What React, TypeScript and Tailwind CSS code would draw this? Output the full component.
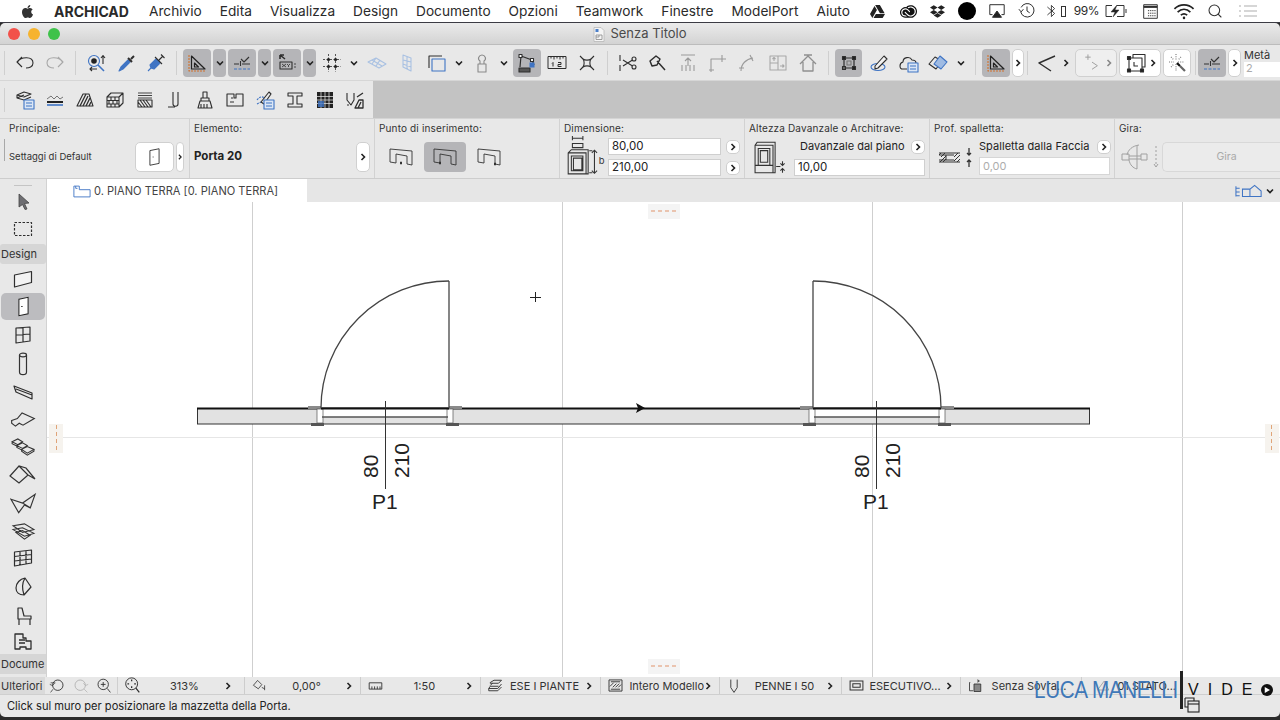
import type { ReactNode } from "react";
import { FaApple, FaDropbox, FaGoogleDrive } from "react-icons/fa";
import { SiAdobecreativecloud } from "react-icons/si";
import { Search } from "lucide-react";

const BLUE = "#3f74c4";

const I = ({ children, s = 20, c = "#2e2e2e" }: { children: ReactNode; s?: number; c?: string }) => (
  <svg viewBox="0 0 20 20" width={s} height={s} fill="none" stroke={c} strokeWidth={1.1} strokeLinejoin="round">
    {children}
  </svg>
);

const Chev = ({ c = "#222" }: { c?: string }) => (
  <svg viewBox="0 0 8 8" width={8} height={8} fill="none" stroke={c} strokeWidth={1.6}>
    <path d="M2.5 1 L5.5 4 L2.5 7" />
  </svg>
);

const ChevDown = () => (
  <svg viewBox="0 0 8 8" width={8} height={8} fill="none" stroke="#222" strokeWidth={1.6}>
    <path d="M1 2.5 L4 5.5 L7 2.5" />
  </svg>
);

const Sep = ({ className = "" }: { className?: string }) => (
  <div className={`w-px h-[24px] shrink-0 bg-[#cfcfcf] ${className}`} />
);

const Tool = ({ w, children }: { w: string; children?: ReactNode }) => (
  <div className={`${w} shrink-0 h-full flex items-center justify-center`}>{children}</div>
);

const Pressed = ({ w, children }: { w: string; children?: ReactNode }) => (
  <div className={`${w} shrink-0 h-[28px] rounded-[4px] bg-[#b5b5b8] flex items-center justify-center`}>{children}</div>
);

const WhiteBtn = ({ w, children, off }: { w: string; children?: ReactNode; off?: boolean }) => (
  <div
    className={`${w} shrink-0 h-[28px] rounded-[5px] border border-[#d0d0d0] flex items-center justify-center ${off ? "bg-[#efefef]" : "bg-white"}`}
  >
    {children}
  </div>
);

const SetSquare = () => (
  <I>
    <path d="M2 2 V18 H19" stroke="#d2702a" strokeDasharray="2 1" />
    <path d="M4.5 3 L18 16 H4.5 Z M7.5 10 L11.5 14 H7.5 Z" stroke="#222" strokeWidth={1.2} />
  </I>
);

const GuideMark = () => (
  <I>
    <path d="M2 11 H7 M10 11 H18 M8.5 8 V13 M9 6 L12 9 L17 4" stroke="#333" />
    <path d="M2 16 H18" stroke={BLUE} strokeDasharray="3 1.5" />
  </I>
);

const MenuBar = () => (
  <div className="h-[23px] shrink-0 bg-white border-b border-[#3c3c44] flex items-center text-[14px] text-[#2a2a2a] relative">
    <FaApple className="ml-[20px] text-[15px] text-[#333]" />
    <span className="ml-[19px] font-bold">ARCHICAD</span>
    <div className="ml-[20px] flex gap-[18px] text-[13.7px]">
      <span>Archivio</span>
      <span>Edita</span>
      <span>Visualizza</span>
      <span>Design</span>
      <span>Documento</span>
      <span>Opzioni</span>
      <span>Teamwork</span>
      <span>Finestre</span>
      <span>ModelPort</span>
      <span>Aiuto</span>
    </div>
    <div className="ml-auto flex items-center">
      <FaGoogleDrive className="text-[15px] text-[#222]" />
      <SiAdobecreativecloud className="ml-[15px] text-[17px] text-[#111]" />
      <FaDropbox className="ml-[13px] text-[15px] text-[#222]" />
      <div className="ml-[13px] w-[18px] h-[18px] rounded-full bg-black" />
      <div className="ml-[12px]">
        <I s={18}>
          <path d="M2 14 V3 H18 V14 H15 M5 14 H2" />
          <path d="M10 10 L15 17 H5 Z" fill="#222" />
        </I>
      </div>
      <div className="ml-[12px]">
        <I s={18}>
          <path d="M3.5 6 A7.5 7.5 0 1 1 3 11 M1 8 L3.5 11 L6 8 M10 5 V10 L13 12" />
        </I>
      </div>
      <div className="ml-[9px] flex items-center">
        <I s={16}>
          <path d="M3 5 L12 13 L8 17 V3 L12 7 L3 15" />
        </I>
        <div className="w-[5px] h-[11px] border border-[#333]" />
      </div>
      <span className="ml-[8px] text-[12px] tracking-[-0.5px]">99%</span>
      <div className="ml-[5px]">
        <svg viewBox="0 0 24 14" width={24} height={14} fill="none" stroke="#333" strokeWidth={1}>
          <path d="M8 1.5 H2 V12.5 H8 M13 1.5 H20 V12.5 H13 M22 5 V9" />
          <path d="M13 1 L7 8 H11 L9 13 L15 6 H11 Z" fill="#222" strokeWidth={0.5} />
        </svg>
      </div>
      <div className="ml-[14px]">
        <I s={17}>
          <path d="M2 2 H18 V18 H2 Z" />
          <path d="M2 4.5 H18" strokeWidth={2.5} />
          <path d="M7 9 H16 M7 12 H16 M7 15 H16" strokeDasharray="1.5 1" />
        </I>
      </div>
      <div className="ml-[14px]">
        <svg viewBox="0 0 20 16" width={22} height={17} fill="none" stroke="#222" strokeWidth={1.6}>
          <path d="M1 5.5 C6 0.5 14 0.5 19 5.5 M4 8.5 C7.5 5 12.5 5 16 8.5 M7 11.5 C8.8 10 11.2 10 13 11.5" />
          <circle cx="10" cy="14" r="1.2" fill="#222" stroke="none" />
        </svg>
      </div>
      <Search className="ml-[12px] text-[#333]" size={16} strokeWidth={1.6} />
      <div className="ml-[15px] mr-[22px]">
        <svg viewBox="0 0 20 14" width={20} height={14} fill="none" stroke="#c9c9c9" strokeWidth={1.4}>
          <path d="M1 2 H3 M6 2 H19 M1 7 H3 M6 7 H19 M1 12 H3 M6 12 H19" />
        </svg>
      </div>
    </div>
  </div>
);

const TitleBar = () => (
  <div className="h-[22px] shrink-0 rounded-t-[5px] border-b border-[#bcbcbc] bg-gradient-to-b from-[#ebebeb] to-[#d3d3d3] flex items-center relative">
    <div className="ml-[8px] flex gap-[8px]">
      <div className="w-[12px] h-[12px] rounded-full bg-[#f2514a]" />
      <div className="w-[12px] h-[12px] rounded-full bg-[#f6b32e]" />
      <div className="w-[12px] h-[12px] rounded-full bg-[#3fc24a]" />
    </div>
    <div className="flex-1 flex items-center justify-center gap-[5px] pr-[60px] pt-[1px] text-[13px] text-[#4a4a4a]">
      <svg viewBox="0 0 12 15" width={12} height={15} fill="#f4f4f4" stroke="#b8b8b8" strokeWidth={0.8}>
        <path d="M1 0.5 H8 L11 3.5 V14.5 H1 Z" />
        <rect x="2.5" y="2" width="3" height="3" fill="#4a7fc9" stroke="none" />
        <path d="M3 8 H9 V12.5 H3 Z M3 10 H6 V8" stroke="#888" />
      </svg>
      <span>Senza Titolo</span>
    </div>
  </div>
);

const ToolbarOne = () => (
  <div className="h-[36px] shrink-0 bg-[#e8e8e8] border-b border-[#d6d6d6] flex items-center">
    <Sep className="ml-[4px]" />
    <Tool w="ml-[5px] w-[30px]">
      <I>
        <path d="M7 4 L2 9 L7 14 M2.5 9 C6 3.5 18 3 18 10 C18 14 14 15 11 15" />
      </I>
    </Tool>
    <Tool w="w-[30px]">
      <I c="#a8a8a8">
        <path d="M13 4 L18 9 L13 14 M17.5 9 C14 3.5 2 3 2 10 C2 14 6 15 9 15" />
      </I>
    </Tool>
    <Sep className="ml-[5px]" />
    <Tool w="ml-[6px] w-[30px]">
      <I>
        <circle cx="7" cy="8" r="5.5" stroke={BLUE} />
        <circle cx="7" cy="8" r="2.8" fill="#222" stroke="none" />
        <path d="M11 12 L17 18" stroke={BLUE} strokeWidth={1.6} />
        <path d="M16 3 V11 M14 5 L16 2.5 L18 5 M3 16 H10 M5 14 L3 16 L5 18" />
      </I>
    </Tool>
    <Tool w="w-[29px]">
      <I>
        <path d="M2 18 L4 14 L11 7 L13 9 L6 16 Z" fill={BLUE} stroke={BLUE} />
        <path d="M11 5 L15 9 M14 6 L17 3" strokeWidth={2} />
      </I>
    </Tool>
    <Tool w="w-[30px]">
      <I>
        <path d="M2 18 L5 15 M5 15 L4 12 L10 6 L14 10 L8 16 Z" fill={BLUE} stroke={BLUE} />
        <path d="M9 4 L16 11 M13 7 L17 3 M15 1.5 L18.5 5" />
      </I>
    </Tool>
    <Sep className="ml-[5px]" />
    <Pressed w="ml-[6px] w-[28px]">
      <SetSquare />
    </Pressed>
    <Pressed w="ml-[2px] w-[13px]">
      <ChevDown />
    </Pressed>
    <Pressed w="ml-[2px] w-[28px]">
      <GuideMark />
    </Pressed>
    <Pressed w="ml-[2px] w-[13px]">
      <ChevDown />
    </Pressed>
    <Pressed w="ml-[2px] w-[28px]">
      <I>
        <path d="M3 2 L8 6 M3 2 H7 M3 2 V6" strokeWidth={1.6} />
        <rect x="3" y="9" width="12" height="7" />
        <path d="M5 11 L9 14 M9 11 L5 14 M10 11 L11.5 12.5 L13 11 M11.5 12.5 V14 M17 11 H19 M17 14 H19" strokeWidth={0.8} />
      </I>
    </Pressed>
    <Pressed w="ml-[2px] w-[13px]">
      <ChevDown />
    </Pressed>
    <Tool w="ml-[2px] w-[28px]">
      <I>
        <path d="M6.5 1 V19 M13.5 1 V19 M1 6.5 H19 M1 13.5 H19" strokeDasharray="2 1.5" strokeWidth={0.8} />
        <circle cx="6.5" cy="6.5" r="1.6" fill="#222" stroke="none" />
        <circle cx="13.5" cy="6.5" r="1.6" fill="#222" stroke="none" />
        <circle cx="6.5" cy="13.5" r="1.6" fill="#222" stroke="none" />
        <circle cx="13.5" cy="13.5" r="1.6" fill="#222" stroke="none" />
      </I>
    </Tool>
    <Tool w="w-[16px]">
      <ChevDown />
    </Tool>
    <Tool w="w-[30px]">
      <I c="#a9c1e2">
        <path d="M1 9 L9 5 L19 11 L12 15 Z M5 7 L15 13 M9 5 L5 11 M13 7 L9 13" />
      </I>
    </Tool>
    <Tool w="w-[30px]">
      <I c="#a9c1e2">
        <path d="M6 2 L14 5 V18 L6 14 Z M6 7 L14 9 M6 11 L14 14 M10 3 V16" />
      </I>
    </Tool>
    <Tool w="w-[30px]">
      <I>
        <path d="M2 15 V3 H15" />
        <path d="M5 6 H18 V18 H5 Z" stroke={BLUE} />
      </I>
    </Tool>
    <Tool w="w-[14px]">
      <ChevDown />
    </Tool>
    <Tool w="w-[32px]">
      <I c="#8a8a8a">
        <path d="M6 11 H14 V19 H6 Z M8 11 V8 C5 6 7 2 10 2 C13 2 15 6 12 8 V11" />
      </I>
    </Tool>
    <Tool w="w-[12px]">
      <ChevDown />
    </Tool>
    <Pressed w="ml-[3px] w-[28px]">
      <I>
        <path d="M4 3 L15 7 M4 3 L3 14 M15 7 L17 12" strokeWidth={1.2} />
        <rect x="2" y="1.5" width="3" height="3" fill="#fff" />
        <rect x="13.5" y="5.5" width="3" height="3" fill="#fff" />
        <path d="M2 15 H13 V19 H2 Z" fill="#555" />
        <rect x="12.5" y="9.5" width="5" height="5" fill={BLUE} stroke="none" />
      </I>
    </Pressed>
    <Tool w="w-[32px]">
      <svg viewBox="0 0 20 14" width={20} height={15} fill="none" stroke="#2e2e2e" strokeWidth={1}>
        <path d="M1 1 H19 V13 H1 Z M4 1 V3 M7 1 V4 M10 1 V3 M13 1 V4 M16 1 V3" />
        <path d="M6 7 V11 M5 8 L6 7 M11 7 H14 V9 H11 V11 H14.5" />
      </svg>
    </Tool>
    <Tool w="w-[28px]">
      <I>
        <path d="M6 6 C8 7.5 12 7.5 14 6 C12.5 8 12.5 12 14 14 C12 12.5 8 12.5 6 14 C7.5 12 7.5 8 6 6 Z" />
        <path d="M3 3 L6 6 M17 3 L14 6 M3 17 L6 14 M17 17 L14 14" />
      </I>
    </Tool>
    <Sep className="ml-[6px]" />
    <Tool w="ml-[5px] w-[30px]">
      <I>
        <circle cx="16" cy="6" r="2" />
        <circle cx="16" cy="14" r="2" />
        <path d="M14.5 7 L5 13 M14.5 13 L5 7 M2 2 V8 M2 12 V18" />
      </I>
    </Tool>
    <Tool w="w-[30px]">
      <I>
        <path d="M2 8 L8 3 L12 6 L9 12 L4 13 Z M9 8 L17 17" strokeWidth={1.5} />
      </I>
    </Tool>
    <Tool w="w-[30px]">
      <I c="#9a9a9a">
        <path d="M3 2 H17 M10 13 V5 M7 8 L10 5 L13 8 M4 12 V18 M8 12 V18 M12 12 V18 M16 12 V18" />
      </I>
    </Tool>
    <Tool w="w-[28px]">
      <I c="#9a9a9a">
        <path d="M4 19 V6 H19 M2 17 H7 M15 2 V9" />
      </I>
    </Tool>
    <Tool w="ml-[1px] w-[30px]">
      <I c="#9a9a9a">
        <path d="M4 18 C4 11 9 6 16 5 M2 15 H7 M13 2 L16 8" />
      </I>
    </Tool>
    <Tool w="ml-[1px] w-[30px]">
      <I c="#a8a8a8">
        <path d="M2 3 H18 V17 H2 Z M10 3 V10 H2 M10 10 V17 M6 8 V5 M4.5 6 L6 4.5 L7.5 6 M12 13 H16 M14.5 11.5 L16 13 L14.5 14.5" />
      </I>
    </Tool>
    <Tool w="w-[30px]">
      <I c="#8f8f8f">
        <path d="M2 11 L10 3 L18 11 M5 9 V18 H15 V9 M6 2 H14" strokeWidth={1.3} />
      </I>
    </Tool>
    <Sep className="ml-[5px]" />
    <Pressed w="ml-[6px] w-[27px]">
      <I>
        <path d="M5 5 H15 V15 H5 Z" strokeWidth={1.2} />
        <rect x="3.5" y="3.5" width="3" height="3" fill="#222" />
        <rect x="13.5" y="3.5" width="3" height="3" fill="#222" />
        <rect x="13.5" y="13.5" width="3" height="3" fill="#222" />
        <rect x="3.5" y="13.5" width="3" height="3" fill="#666" />
        <path d="M8 8 H12 V12 H8 Z" stroke="#777" />
      </I>
    </Pressed>
    <Tool w="ml-[4px] w-[28px]">
      <I>
        <ellipse cx="8" cy="14" rx="7" ry="3.5" stroke={BLUE} />
        <path d="M5 13 L14 3 L17 6 L8 15 L5 16 Z" fill="#f2f2f2" />
      </I>
    </Tool>
    <Tool w="ml-[1px] w-[28px]">
      <I>
        <path d="M8 16 H4 C0 16 0 10 4 9 C4 4 11 3 13 7 C15 7 17 8 17 10" />
        <rect x="9" y="10" width="10" height="9" fill="#dbe6f5" stroke={BLUE} />
        <path d="M11 13 H17 M11 16 H17" stroke={BLUE} />
      </I>
    </Tool>
    <Tool w="ml-[1px] w-[28px]">
      <I>
        <path d="M1 11 L7 4 L14 8 L8 16 Z" />
        <path d="M6 11 L12 3 L19 9 L13 16 Z" fill="#9fbbe3" stroke={BLUE} />
      </I>
    </Tool>
    <Tool w="ml-[2px] w-[14px]">
      <ChevDown />
    </Tool>
    <Sep className="ml-[7px]" />
    <Pressed w="ml-[6px] w-[28px]">
      <SetSquare />
    </Pressed>
    <WhiteBtn w="ml-[2px] w-[12px]">
      <Chev />
    </WhiteBtn>
    <Sep className="ml-[3px]" />
    <Tool w="ml-[5px] w-[28px]">
      <I>
        <path d="M18 3 L2 10 L14 18" strokeWidth={1.4} />
      </I>
    </Tool>
    <Tool w="w-[10px]">
      <Chev />
    </Tool>
    <WhiteBtn w="ml-[4px] w-[42px]" off>
      <div className="w-full flex items-center justify-between pl-[7px] pr-[3px]">
        <I s={18} c="#a0a0a0">
          <path d="M5.5 0.5 V6.5 M2.5 3.5 H8.5 M10 9 L16 13 L10 17" />
        </I>
        <Chev c="#888" />
      </div>
    </WhiteBtn>
    <WhiteBtn w="ml-[2px] w-[42px]">
      <div className="w-full flex items-center justify-between pl-[6px] pr-[3px]">
        <I>
          <path d="M3 5 H16 V18 H3 Z M7 5 V1.5 H19 V14 H16" />
          <path d="M8 9 V13 H12" />
          <rect x="1.5" y="3.5" width="3" height="3" fill="#222" />
          <rect x="14.5" y="16" width="3" height="3" fill="#222" />
          <rect x="1.5" y="16" width="3" height="3" fill="#222" />
        </I>
        <Chev />
      </div>
    </WhiteBtn>
    <WhiteBtn w="ml-[2px] w-[28px]">
      <I>
        <path d="M9 1 V7 M9 11 V18 M2 9 H7 M11 9 H17 M4 4 L7 7 M14 4 L11 7 M4 14 L7 11" stroke="#777" strokeDasharray="1 1.2" />
        <path d="M10 10 L13 13" strokeWidth={2.2} stroke="#111" />
        <path d="M13 13 L18 18" strokeWidth={2.2} stroke="#666" />
      </I>
    </WhiteBtn>
    <Sep className="ml-[4px]" />
    <Pressed w="ml-[2px] w-[28px]">
      <GuideMark />
    </Pressed>
    <WhiteBtn w="ml-[2px] w-[13px]">
      <Chev />
    </WhiteBtn>
    <div className="ml-[3px] flex-1 h-full pt-[4px] text-[11px] leading-[13px] text-[#333]">
      <div>Metà</div>
      <div className="h-[15px] bg-white pl-[2px] text-[#aaa]">2</div>
    </div>
  </div>
);

const ToolbarTwo = () => (
  <div className="h-[37px] shrink-0 flex bg-[#c3c3c3]">
    <div className="w-[373px] shrink-0 bg-[#e8e8e8] flex items-center">
      <Sep className="ml-[4px]" />
      <Tool w="ml-[5px] w-[30px]">
        <I>
          <path d="M2 5 L9 2 L16 4 L9 7 Z M2 8 L9 5 M2 5 V8 L9 10 L16 7" />
          <rect x="9" y="10" width="10" height="9" fill="#dbe6f5" stroke={BLUE} />
          <path d="M11 13 H17 M11 16 H17" stroke={BLUE} />
        </I>
      </Tool>
      <Tool w="w-[30px]">
        <I>
          <path d="M2 9 L6 6 L9 9 L12 6 L15 9 L18 7" stroke="#555" strokeWidth={0.8} />
          <path d="M2 12 H18" strokeWidth={2} stroke="#222" />
          <path d="M2 15 H18" stroke={BLUE} strokeWidth={1.6} />
        </I>
      </Tool>
      <Tool w="w-[30px]">
        <I>
          <path d="M2 16 L8 4 H14 L18 16 Z" />
          <path d="M5 16 L11 4 M8 16 L13 6 M11 16 L15 8 M14 16 L16 12" strokeWidth={1.3} />
        </I>
      </Tool>
      <Tool w="w-[30px]">
        <I>
          <path d="M2 7 L6 3 H18 V13 L14 17 H2 Z M2 7 H14 V17 M14 7 L18 3 M2 10.5 H14 M2 14 H14 M6 7 V10.5 M10 7 V10.5 M4 10.5 V14 M8 10.5 V14 M12 10.5 V14 M6 14 V17 M10 14 V17" />
        </I>
      </Tool>
      <Tool w="w-[30px]">
        <I>
          <path d="M3 3 H17 M3 5.5 H17 M3 8 H17" strokeWidth={1.2} stroke={"#444"} />
          <path d="M3 10 H17 V17 H3 Z M5 10 L10 17 M8 10 L13 17 M11 10 L16 17 M3 12 L7 17" />
        </I>
      </Tool>
      <Tool w="w-[30px]">
        <I>
          <path d="M8 2 V14 C8 17 13 17 13 14 V2 M3 17 H10" />
        </I>
      </Tool>
      <Tool w="w-[30px]">
        <I>
          <path d="M8 2 H12 V8 H8 Z M6 8 H14 V11 H6 Z M5 11 H15 L17 18 H3 Z M6 14 V18 M9 14 V18 M12 14 V18" />
        </I>
      </Tool>
      <Tool w="w-[30px]">
        <I>
          <path d="M2 4 H9 V8 H11 V4 H18 V16 H2 Z M6 8 H8 M5 12 H9" />
        </I>
      </Tool>
      <Tool w="w-[30px]">
        <I>
          <path d="M2 10 C5 6 9 6 9 9 M2 14 L6 12" stroke={BLUE} strokeDasharray="2 1" />
          <path d="M6 12 L14 2 L16 4 L9 14 Z" />
          <rect x="9" y="10" width="10" height="9" fill="#dbe6f5" stroke={BLUE} />
          <path d="M11 13 H17 M11 16 H17" stroke={BLUE} />
        </I>
      </Tool>
      <Tool w="w-[30px]">
        <I>
          <path d="M3 3 H17 V6 H12 V14 H17 V17 H3 V14 H8 V6 H3 Z" />
        </I>
      </Tool>
      <Tool w="w-[30px]">
        <svg viewBox="0 0 16 16" width={16} height={16}>
          <rect width="16" height="16" fill="#222" />
          <path d="M0 4.5 H16 M0 8 H16 M0 11.5 H16 M4 0 V16 M8 0 V16 M12 0 V16" stroke="#eee" strokeWidth={0.7} />
          <rect x="1" y="9" width="6" height="6" fill={BLUE} opacity={0.8} />
        </svg>
      </Tool>
      <Tool w="w-[30px]">
        <I>
          <path d="M2 3 V10 L6 15 L9 10 V3 M2 15 H4" />
          <path d="M12 7 L18 3 M10 18 L14 10 H18 V18 Z M13 18 L16 12" strokeWidth={1.3} />
        </I>
      </Tool>
    </div>
  </div>
);

const SectionLabel = ({ children }: { children: ReactNode }) => (
  <div className="text-[10px] leading-[12px] text-[#333] tracking-[0.15px]">{children}</div>
);

const CircleChev = () => (
  <div className="w-[14px] h-[14px] shrink-0 rounded-[5px] bg-white border border-[#cfcfcf] flex items-center justify-center">
    <Chev />
  </div>
);

const InsertIcon = ({ dot }: { dot: string }) => (
  <svg viewBox="0 0 24 18" width={24} height={18} fill="none" stroke="#333" strokeWidth={0.9}>
    <path d="M1 1 L23 3 V17 L18 16 V8 L7 6 V15 L1 14 Z" />
    <path d={dot} strokeWidth={2.4} />
  </svg>
);

const InfoBox = () => (
  <div className="h-[61px] shrink-0 bg-[#e8e8e8] border-t border-[#d4d4d4] border-b border-b-[#cdcdcd] flex">
    <div className="w-[190px] shrink-0 border-r border-[#d2d2d2] pl-[9px] pt-[3px] relative">
      <SectionLabel>Principale:</SectionLabel>
      <div className="mt-[8px] flex items-center">
        <span className="text-[9.5px] text-[#333] w-[126px]">Settaggi di Default</span>
        <div className="w-[39px] h-[30px] rounded-[5px] bg-white border border-[#d0d0d0] flex items-center justify-center">
          <svg viewBox="0 0 12 20" width={11} height={20} fill="none" stroke="#333" strokeWidth={1}>
            <path d="M1 3 L11 1 V17 L1 19 Z M4 10 H5" />
          </svg>
        </div>
        <div className="ml-[2px] w-[8px] h-[30px] rounded-[4px] bg-white border border-[#d0d0d0] flex items-center justify-center">
          <Chev />
        </div>
      </div>
      <div className="absolute left-[4px] top-[20px] w-px h-[22px] bg-[#a8a8a8]" />
    </div>
    <div className="w-[185px] shrink-0 border-r border-[#d2d2d2] pl-[4px] pt-[3px]">
      <SectionLabel>Elemento:</SectionLabel>
      <div className="mt-[8px] flex items-center justify-between pr-[4px]">
        <span className="text-[11.5px] font-bold text-[#222]">Porta 20</span>
        <div className="w-[14px] h-[30px] rounded-[5px] bg-white border border-[#d0d0d0] flex items-center justify-center">
          <Chev />
        </div>
      </div>
    </div>
    <div className="w-[185px] shrink-0 border-r border-[#d2d2d2] pl-[4px] pt-[3px]">
      <SectionLabel>Punto di inserimento:</SectionLabel>
      <div className="mt-[8px] flex items-center">
        <div className="ml-[2px] w-[40px] h-[30px] flex items-center justify-center">
          <InsertIcon dot="M11 15 H13" />
        </div>
        <div className="ml-[3px] w-[42px] h-[30px] rounded-[4px] bg-[#b5b5b8] flex items-center justify-center">
          <InsertIcon dot="M6 15 H8" />
        </div>
        <div className="ml-[2px] w-[42px] h-[30px] flex items-center justify-center">
          <InsertIcon dot="M17 16 H19" />
        </div>
      </div>
    </div>
    <div className="w-[185px] shrink-0 border-r border-[#d2d2d2] pl-[4px] pt-[3px]">
      <SectionLabel>Dimensione:</SectionLabel>
      <div className="mt-[4px] flex">
        <div className="w-[44px] shrink-0 -mt-[3px]">
          <svg viewBox="0 0 40 40" width={42} height={42} fill="none" stroke="#333" strokeWidth={1}>
            <path d="M8 3 H18 M8 1 V5 M18 1 V5 M8 8 H18 V12 H8 Z" />
            <path d="M4 17 L7 14 H23 V37 H4 Z M4 17 H21 V37 M7 20 H18 V34 H7 Z M9 22 H17 V33 H9 Z" />
            <path d="M29 15 V36 M26.5 17 L29 14.5 L31.5 17 M26.5 34 L29 36.5 L31.5 34 M24 15 H27 M24 36 H27" />
            <text x="33" y="28" fontSize="9" fill="#333" stroke="none" fontFamily="Inter, sans-serif">b</text>
          </svg>
        </div>
        <div className="flex flex-col gap-[4px]">
          <div className="flex items-center">
            <div className="w-[113px] h-[17px] bg-white border border-[#cfcfcf] pl-[3px] text-[11.5px] leading-[15px] text-[#222]">80,00</div>
            <div className="ml-[5px]"><CircleChev /></div>
          </div>
          <div className="flex items-center">
            <div className="w-[113px] h-[17px] bg-white border border-[#cfcfcf] pl-[3px] text-[11.5px] leading-[15px] text-[#222]">210,00</div>
            <div className="ml-[5px]"><CircleChev /></div>
          </div>
        </div>
      </div>
    </div>
    <div className="w-[185px] shrink-0 border-r border-[#d2d2d2] pl-[4px] pt-[3px]">
      <SectionLabel>Altezza Davanzale o Architrave:</SectionLabel>
      <div className="mt-[4px] flex">
        <div className="w-[45px] shrink-0 pl-[5px] pt-[3px]">
          <svg viewBox="0 0 36 32" width={38} height={34} fill="none" stroke="#333" strokeWidth={1}>
            <path d="M1 4 L3 1 H20 V30 H1 Z M1 4 H18 V30 M4 7 H15 V23 H4 Z M6 9 H13 V20 H6 Z M1 23 H18" />
            <path d="M21 24 H25 M27 19 V23 M27 26 V30 M25 21 L27 23 L29 21 M25 28 L27 26 L29 28" />
          </svg>
        </div>
        <div className="flex-1 pr-[4px]">
          <div className="flex items-center h-[17px]">
            <span className="flex-1 pl-[6px] text-[11px] text-[#222]">Davanzale dal piano</span>
            <CircleChev />
          </div>
          <div className="mt-[4px] w-[131px] h-[17px] bg-white border border-[#cfcfcf] pl-[3px] text-[11.5px] leading-[15px] text-[#222]">10,00</div>
        </div>
      </div>
    </div>
    <div className="w-[185px] shrink-0 border-r border-[#d2d2d2] pl-[4px] pt-[3px]">
      <SectionLabel>Prof. spalletta:</SectionLabel>
      <div className="mt-[4px] flex">
        <div className="w-[45px] shrink-0 pl-[4px] pt-[9px]">
          <svg viewBox="0 0 36 24" width={36} height={24} fill="none" stroke="#333" strokeWidth={1}>
            <path d="M1 6 H22 M1 15 H22 M1 8 H8 V13 H1 M8 8 H16 M8 13 H16" />
            <path d="M3 6 L1 8 M7 6 L3 10 M8 9 L2 15 M8 12 L5 15 M20 6 L16 10 M22 8 L16 14 M22 12 L19 15" />
            <path d="M31 1 V8 M29 6 L31 8 L33 6 M31 20 V13 M29 15 L31 13 L33 15" strokeWidth={1.3} />
          </svg>
        </div>
        <div className="flex-1 pr-[3px]">
          <div className="flex items-center h-[17px]">
            <span className="flex-1 text-[11px] tracking-[0.05px] text-[#222]">Spalletta dalla Faccia</span>
            <CircleChev />
          </div>
          <div className="mt-[2px] w-[131px] h-[18px] bg-white border border-[#d6d6d6] pl-[3px] text-[11px] leading-[16px] text-[#adadad]">0,00</div>
        </div>
      </div>
    </div>
    <div className="flex-1 pl-[4px] pt-[3px]">
      <SectionLabel>Gira:</SectionLabel>
      <div className="mt-[8px] flex items-center">
        <svg viewBox="0 0 42 30" width={42} height={30} fill="none" stroke="#a0a0a0" strokeWidth={1}>
          <path d="M3 12 H10 V18 H3 Z M22 12 H28 V18 H22 Z M10 14 H22 M10 17 H22" />
          <path d="M20 3 C13 4 9 8 8 13 M10 18 C11 23 14 26 18 27 V3" />
          <path d="M37 4 V22" strokeDasharray="2 2" />
          <path d="M35 22 L37 25 L39 22" />
        </svg>
        <div className="ml-[1px] flex-1 h-[30px] rounded-l-[5px] bg-[#ebebeb] border border-[#d8d8d8] border-r-0 flex items-center justify-center text-[10.5px] text-[#a9a9a9] pl-[10px]">
          Gira
        </div>
      </div>
    </div>
  </div>
);

const ToolSlot = ({ children, h = "h-[28px]" }: { children: ReactNode; h?: string }) => (
  <div className={`${h} shrink-0 flex items-center justify-center`}>{children}</div>
);

const Toolbox = () => (
  <div className="w-[47px] shrink-0 bg-[#e8e8e8] border-r border-[#d2d2d2] flex flex-col">
    <div className="mt-[6px] mx-auto w-[18px] h-px bg-[#c4c4c4]" />
    <ToolSlot h="h-[30px]">
      <svg viewBox="0 0 20 20" width={20} height={20} fill="#6e6e72" stroke="#444" strokeWidth={0.8}>
        <path d="M6 3 L16 12 L11.5 12.5 L14 18 L12 18.5 L9.5 13.5 L6 16 Z" />
      </svg>
    </ToolSlot>
    <ToolSlot h="h-[26px]">
      <I>
        <rect x="1.5" y="3.5" width="17" height="13" strokeDasharray="2.5 1.5" strokeWidth={1.2} />
      </I>
    </ToolSlot>
    <div className="mt-[2px] h-[20px] shrink-0 bg-[#d6d6d6] rounded-[3px] text-[11px] leading-[20px] pl-[1px] text-[#333]">Design</div>
    <ToolSlot h="h-[29px]">
      <I>
        <path d="M1.5 6 L18.5 2.5 V13.5 L1.5 18 Z" fill="#f3f3f3" strokeWidth={1.2} />
      </I>
    </ToolSlot>
    <div className="mx-[1px] h-[27px] shrink-0 rounded-[5px] bg-[#bcbcbf] flex items-center justify-center">
      <svg viewBox="0 0 12 22" width={11} height={21} fill="#fff" stroke="#222" strokeWidth={1.1}>
        <path d="M1 3 L11 1 V19 L1 21 Z" />
        <path d="M3.5 11 H5" />
      </svg>
    </div>
    <ToolSlot h="h-[29px]">
      <I>
        <path d="M3 3 L17 2 V16 L3 18 Z M10 2.5 V17 M3 10 L17 9" strokeWidth={1.2} />
      </I>
    </ToolSlot>
    <ToolSlot h="h-[30px]">
      <svg viewBox="0 0 10 24" width={10} height={24} fill="none" stroke="#333" strokeWidth={1.2}>
        <ellipse cx="5" cy="3" rx="3.5" ry="1.8" />
        <path d="M1.5 3 V20 C1.5 23.5 8.5 23.5 8.5 20 V3" />
      </svg>
    </ToolSlot>
    <ToolSlot h="h-[26px]">
      <I>
        <path d="M1 4 L19 11 V17 L3 10 Z M3 7 L19 13" strokeWidth={1.2} />
      </I>
    </ToolSlot>
    <ToolSlot>
      <svg viewBox="0 0 26 18" width={26} height={17} fill="none" stroke="#333" strokeWidth={1.2}>
        <path d="M1 10 L7 8 L12 2 L25 8 L13 15 L9 13 L5 16 L1 13 Z" />
      </svg>
    </ToolSlot>
    <ToolSlot>
      <svg viewBox="0 0 26 20" width={25} height={19} fill="none" stroke="#333" strokeWidth={1.1}>
        <path d="M1 4 L7 1 L12 4 L7 7 Z M6 8 L12 5 L17 8 L12 11 Z M11 12 L17 9 L24 12 L17 16 Z M1 4 V6 L7 9 M6 8 V10 L12 13 M11 12 V14 L17 18 L24 14 V12" />
      </svg>
    </ToolSlot>
    <ToolSlot>
      <svg viewBox="0 0 28 20" width={28} height={20} fill="none" stroke="#333" strokeWidth={1.2}>
        <path d="M1 11 L10 1 L17 3 L26 14 L19 10 L10 18 Z M10 1 L19 10" />
      </svg>
    </ToolSlot>
    <ToolSlot h="h-[30px]">
      <svg viewBox="0 0 28 22" width={27} height={22} fill="none" stroke="#333" strokeWidth={1.2}>
        <path d="M1 6 L13 10 L26 1 L21 15 L15 12 L9 20 Z M13 10 L21 15" />
      </svg>
    </ToolSlot>
    <ToolSlot h="h-[24px]">
      <svg viewBox="0 0 26 20" width={25} height={19} fill="none" stroke="#333" strokeWidth={1.1}>
        <path d="M2 4 L14 2 L24 8 L12 11 Z M2 8 L12 6 L24 12 L14 15 Z M5 11 L12 9 L20 14 L14 18 Z" />
      </svg>
    </ToolSlot>
    <ToolSlot h="h-[30px]">
      <I>
        <path d="M1.5 4 L18.5 2 V15 L1.5 18 Z M1.5 8.5 L18.5 6.5 M1.5 13 L18.5 11 M7 3.5 V17 M13 3 V16" strokeWidth={1.2} />
      </I>
    </ToolSlot>
    <ToolSlot>
      <I>
        <path d="M3 11 C3 6 7 2 12 1 L18 10 L11 18 C6 18 3 15 3 11 Z M12 1 C9 6 9 12 11 18" strokeWidth={1.2} />
      </I>
    </ToolSlot>
    <ToolSlot h="h-[29px]">
      <I>
        <path d="M5 2 H9 L11 10 H18 V13 H5 Z M6 13 V19 M17 13 V19" strokeWidth={1.2} />
      </I>
    </ToolSlot>
    <ToolSlot h="h-[24px]">
      <I>
        <path d="M2 2 H10 V6 H13 V9 H18 V17 H13 V15 H7 V17 H2 Z M6 8 H12 M6 11 H12" strokeWidth={1.3} />
      </I>
    </ToolSlot>
    <div className="mt-auto mb-[3px] h-[20px] shrink-0 bg-[#d6d6d6] text-[11px] leading-[20px] pl-[1px] text-[#333] whitespace-nowrap">Docume</div>
  </div>
);

const Door = ({ x, dir }: { x: number; dir: 1 | -1 }) => {
  // x is the hinge side jamb, dir points to the swing side
  const far = x + dir * 128;
  const jamb = (jx: number, out: number) => (
    <g>
      <rect x={out > 0 ? jx : jx - 13} y={406} width={13} height={3} fill="#8a8a8a" />
      <rect x={out > 0 ? jx - 3 : jx - 10} y={423} width={13} height={3} fill="#555" />
      <rect x={Math.min(jx - 4 * -out, jx + 2 * -out)} y={409} width={6} height={14} fill="#fff" stroke="#555" strokeWidth={0.7} />
    </g>
  );
  const left = Math.min(x, far);
  const right = Math.max(x, far);
  return (
    <g>
      <rect x={left} y={408} width={128} height={9} fill="#fff" />
      {jamb(right, 1)}
      {jamb(left, -1)}
      <path d={`M${left} 408.5 H${right}`} stroke="#111" strokeWidth={2} />
      <path d={`M${left + 1} 417 H${right - 1}`} stroke="#555" strokeWidth={1.5} />
      <path d={`M${x} 281 V408`} stroke="#444" strokeWidth={1.3} />
      <path d={`M${x} 281 A128 127 0 0 ${dir > 0 ? 1 : 0} ${far} 408`} stroke="#444" strokeWidth={1.3} fill="none" />
    </g>
  );
};

const Mark = ({ x, p1 }: { x: number; p1: number }) => (
  <g fontFamily="'Liberation Sans', Arial, sans-serif" fontSize={21} fill="#222">
    <path d={`M${x} 401 V489`} stroke="#333" strokeWidth={1} />
    <text transform={`translate(${x - 8} 478) rotate(-90)`}>80</text>
    <text transform={`translate(${x + 23} 478) rotate(-90)`}>210</text>
    <text x={p1} y={509}>P1</text>
  </g>
);

const Canvas = () => (
  <div className="flex-1 bg-white relative overflow-hidden">
    <svg viewBox="47 202 1233 475" className="w-full h-full block" fill="none">
      {[252, 562, 872, 1182].map((x) => (
        <path key={x} d={`M${x + 0.5} 202 V677`} stroke="#cfcfcf" strokeWidth={1} />
      ))}
      <path d="M47 437.5 H1280" stroke="#e6e6e6" strokeWidth={1} />

      <rect x="648" y="204" width="32" height="15" fill="#f4f4f4" />
      <path d="M651 211 H678" stroke="#e0936a" strokeDasharray="4 3" />
      <rect x="648" y="659" width="32" height="15" fill="#f4f4f4" />
      <path d="M651 666 H678" stroke="#e0936a" strokeDasharray="4 3" />
      <rect x="49" y="424" width="14" height="29" fill="#f6f3ee" />
      <path d="M56.5 425 V452" stroke="#e0a478" strokeDasharray="4 3" />
      <rect x="1265" y="424" width="14" height="29" fill="#f6f3ee" />
      <path d="M1271.5 425 V452" stroke="#e0a478" strokeDasharray="4 3" />

      <rect x="197.5" y="408.5" width="892" height="15.5" fill="#e2e2e2" stroke="#333" strokeWidth={1} />
      <path d="M197 408.5 H1090" stroke="#111" strokeWidth={2} />
      <Door x={449} dir={-1} />
      <Door x={813} dir={1} />
      <path d="M636 403 L645 408 L636 413 L638 408 Z" fill="#111" />
      <path d="M535.5 292 V302 M530 297.5 H541" stroke="#222" strokeWidth={1} />

      <Mark x={385.5} p1={372} />
      <Mark x={876.5} p1={863} />
    </svg>
  </div>
);

const Cell = ({
  w = "w-[120px]",
  pl = "pl-[5px]",
  icon,
  label,
  chev = true,
  text = "justify-center",
}: {
  w?: string;
  pl?: string;
  icon: ReactNode;
  label: string;
  chev?: boolean;
  text?: string;
}) => (
  <div className={`${w} ${pl} shrink-0 h-full flex items-center border-l border-[#cdcdcd] pr-[7px]`}>
    <div className="w-[18px] shrink-0 flex justify-center">{icon}</div>
    <span className={`flex-1 flex ${text} pt-[1px] whitespace-nowrap overflow-hidden`}>{label}</span>
    {chev && <Chev />}
  </div>
);

const StatusBar = () => (
  <div className="h-[18px] shrink-0 bg-[#e8e8e8] flex items-center text-[11px] text-[#333] border-b border-[#cfcfcf]">
    <div className="w-[45px] shrink-0 h-full bg-[#dadada] pl-[1px] leading-[18px]">Ulteriori</div>
    <Tool w="ml-[3px] w-[18px]">
      <I s={16}>
        <circle cx="11" cy="9" r="6.5" />
        <path d="M1 8 L4.5 9.5 L7 6.5 M5 14 L2 18 M2 6 H8" strokeWidth={0.9} />
      </I>
    </Tool>
    <Tool w="ml-[6px] w-[18px]">
      <I s={16} c="#b0b0b0">
        <circle cx="9" cy="9" r="6.5" />
        <path d="M19 8 L15.5 9.5 L13 6.5 M14 14 L18 18" strokeWidth={0.9} />
      </I>
    </Tool>
    <Tool w="ml-[5px] w-[18px]">
      <I s={16}>
        <circle cx="9" cy="8" r="6.5" />
        <path d="M6 8 H12 M9 5 V11 M14 13 L18 18" />
      </I>
    </Tool>
    <Sep className="ml-[4px] !h-full" />
    <Tool w="ml-[5px] w-[18px]">
      <I s={17}>
        <circle cx="9" cy="8" r="7" />
        <path d="M9 3 V5 M9 11 V13 M4 8 H6 M12 8 H14 M14 13 L18 18" strokeWidth={1.5} />
      </I>
    </Tool>
    <div className="w-[103px] shrink-0 flex items-center">
      <span className="ml-[29px] flex-1 pt-[1px]">313%</span>
      <span className="mr-[12px]"><Chev /></span>
    </div>
    <Cell
      w="w-[116px]"
      label="0,00°"
      icon={
        <I s={14}>
          <path d="M2 9 L8 2 L14 8 L9 14 Z M14 12 L18 14 M18 9 V16" />
        </I>
      }
    />
    <Cell
      label="1:50"
      icon={
        <svg viewBox="0 0 16 10" width={15} height={9} fill="none" stroke="#333" strokeWidth={1}>
          <path d="M1 2 H15 V9 H1 Z M4 6 V9 M7 6 V9 M10 6 V9 M13 6 V9" />
        </svg>
      }
    />
    <Cell
      label="ESE I PIANTE"
      icon={
        <I s={15}>
          <path d="M3 6 L8 3 H18 L14 7 H3 Z M3 10 L6 7 M14 11 H3 L1 14 H13 L18 8 M1 14 V17 H13 L18 12" strokeWidth={1.2} />
        </I>
      }
    />
    <Cell
      w="w-[119px]"
      text="justify-end"
      label="Intero Modello"
      icon={
        <svg viewBox="0 0 16 14" width={15} height={13} fill="none" stroke="#333" strokeWidth={1}>
          <path d="M1 1 H15 V13 H1 Z M3 3 H13 M3 11 H13" />
          <path d="M2 8 L6 4 M5 9 L9 5 M8 9 L12 5 M11 9 L14 6" />
        </svg>
      }
    />
    <Cell
      w="w-[122px]"
      label="PENNE I 50"
      icon={
        <I s={16}>
          <path d="M6 2 V12 L10 18 L14 12 V2" />
        </I>
      }
    />
    <Cell
      w="w-[119px]"
      label="ESECUTIVO..."
      icon={
        <svg viewBox="0 0 16 12" width={15} height={11} fill="none" stroke="#333" strokeWidth={1.1}>
          <path d="M1 1 H15 V11 H1 Z M4 4 H12 V8 H4 Z" />
        </svg>
      }
    />
    <Cell
      w="w-[121px]"
      chev={false}
      label="Senza Sovra..."
      icon={
        <I s={15}>
          <path d="M3 6 H2 V17 H7 M12 4 H15 M13 2 L15 4 L13 6" />
          <rect x="8" y="8" width="9" height="10" fill="#888" />
        </I>
      }
    />
    <Cell
      w="w-[102px]"
      pl="pl-[12px]"
      chev={false}
      label="01 STATO..."
      text="justify-end"
      icon={
        <I s={15} c="#999">
          <path d="M2 16 L11 4 L17 16 Z" />
        </I>
      }
    />
  </div>
);

const Watermark = () => (
  <div className="absolute left-[1034px] top-[671px] h-[38px] flex items-center font-['Liberation_Sans',Arial,sans-serif]">
    <span className="w-[146px] text-[24px] font-light text-[#3f78b8] whitespace-nowrap tracking-[-0.4px] origin-left scale-x-[0.86]">LUCA MANELLI</span>
    <div className="w-[3px] h-[38px] bg-[#222]" />
    <div className="ml-[5px] flex items-center gap-[9px] text-[16px] text-[#111]">
      <span>V</span>
      <span>I</span>
      <span>D</span>
      <span>E</span>
      <div className="w-[12px] h-[12px] rounded-full bg-[#111] flex items-center justify-center">
        <svg viewBox="0 0 8 8" width={6} height={6} fill="#fff">
          <path d="M1 0 L8 4 L1 8 Z" />
        </svg>
      </div>
    </div>
    <div className="absolute left-[150px] top-[26px]">
      <svg viewBox="0 0 16 16" width={16} height={16} fill="none" stroke="#222" strokeWidth={1.1}>
        <path d="M1 1 H10 V4 M1 1 V10 H4" />
        <rect x="4" y="4" width="11" height="11" fill="#e8e8e8" />
        <path d="M4 7 H15" />
      </svg>
    </div>
  </div>
);

export default function App() {
  return (
    <div className="w-[1280px] h-[720px] overflow-hidden bg-[#2b2b2b] flex flex-col relative font-['Inter','Liberation_Sans',sans-serif]">
      <MenuBar />
      <TitleBar />
      <ToolbarOne />
      <ToolbarTwo />
      <InfoBox />
      <div className="flex-1 min-h-0 flex">
        <Toolbox />
        <div className="flex-1 flex flex-col">
          <div className="h-[23px] shrink-0 bg-[#e6e6e6] flex">
            <div className="w-[260px] shrink-0 bg-white flex items-center pl-[26px] pt-[1px] text-[11.1px] text-[#444]">
              <svg viewBox="0 0 20 14" width={18} height={13} fill="none" stroke={BLUE} strokeWidth={1}>
                <path d="M1 13 V1 H7 V5 H19 V13 Z M3 1 V3.5 H5" />
              </svg>
              <span className="ml-[3px]">0. PIANO TERRA [0. PIANO TERRA]</span>
            </div>
            <div className="ml-auto mr-[6px] flex items-center gap-[3px]">
              <svg viewBox="0 0 30 14" width={28} height={14} fill="none" stroke={BLUE} strokeWidth={1.1}>
                <path d="M1 2 V13 M1 4 H5 M1 8 H5 M1 12 H5 M8 13 V5 H16 L21 1 L28 7 V13 Z M16 5 V13" />
              </svg>
              <ChevDown />
            </div>
          </div>
          <Canvas />
        </div>
      </div>
      <StatusBar />
      <div className="h-[22px] shrink-0 bg-[#e8e8e8] rounded-b-[5px] flex items-center pl-[7px] text-[11.1px] text-[#222]">
        Click sul muro per posizionare la mazzetta della Porta.
      </div>
      <div className="h-[3px] shrink-0" />
      <Watermark />
    </div>
  );
}
